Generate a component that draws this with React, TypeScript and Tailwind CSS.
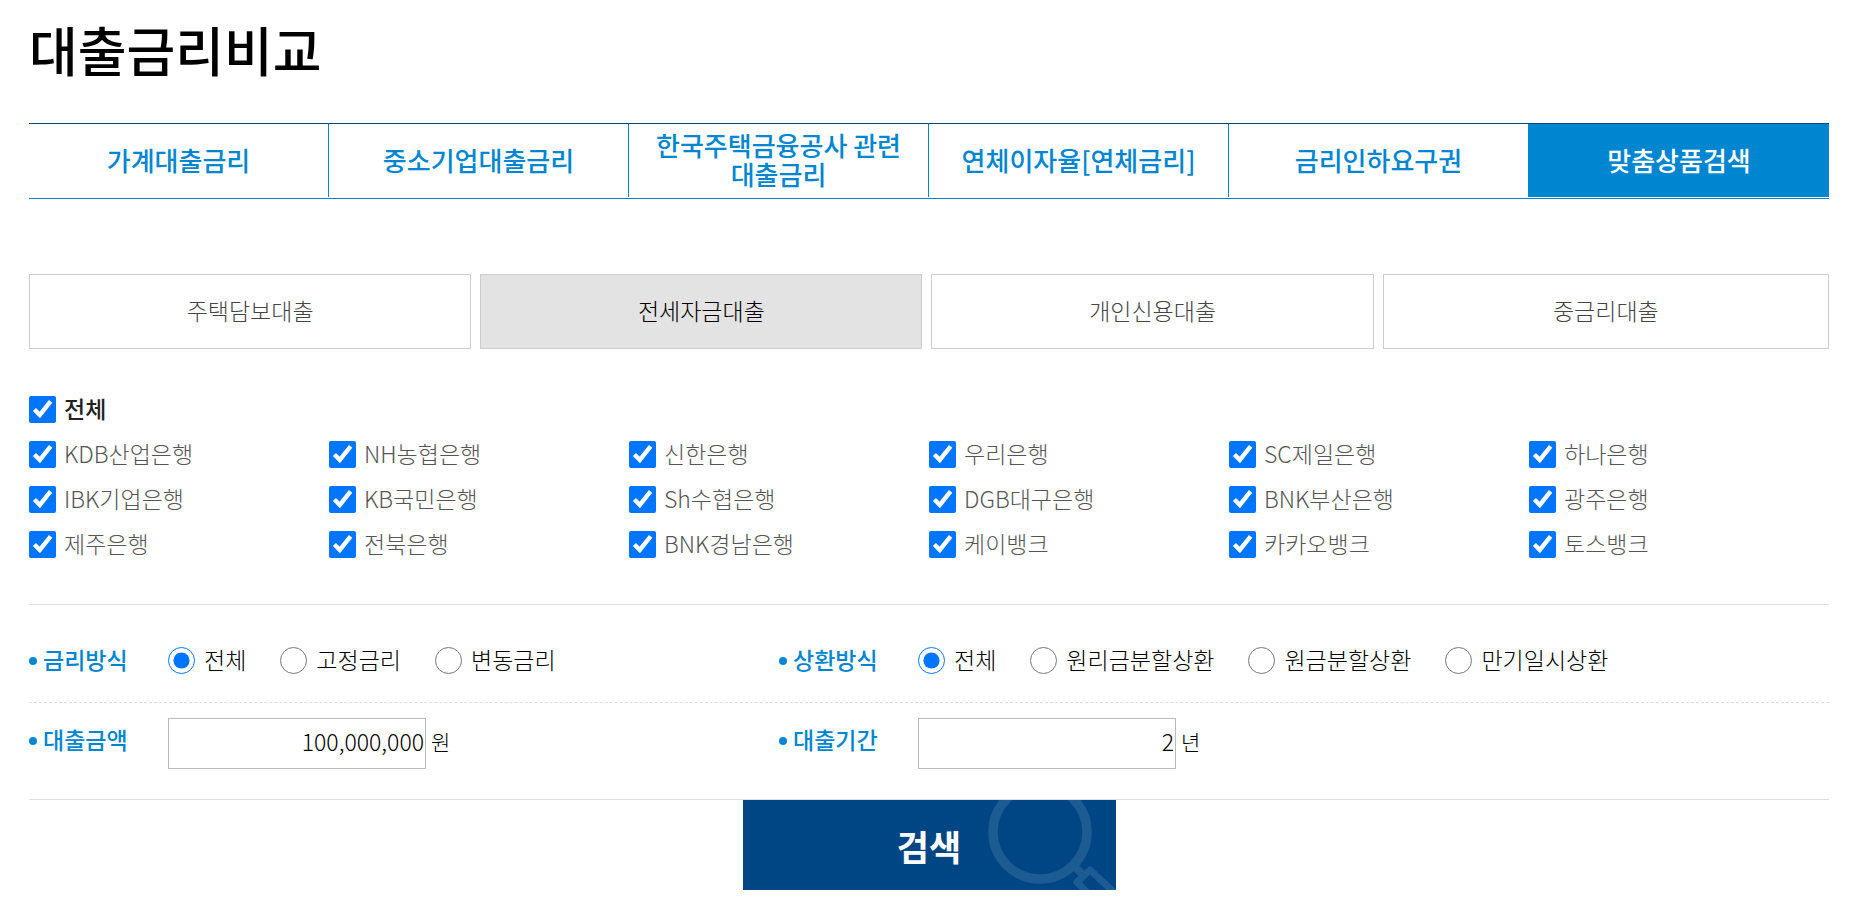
import React, { useState } from "react";
import clsx from "clsx";

const TABS = [
    "가계대출금리",
    "중소기업대출금리",
    "한국주택금융공사 관련 대출금리",
    "연체이자율[연체금리]",
    "금리인하요구권",
    "맞춤상품검색",
];

const LOAN_TYPES = ["주택담보대출", "전세자금대출", "개인신용대출", "중금리대출"];

const BANKS = [
    "KDB산업은행",
    "NH농협은행",
    "신한은행",
    "우리은행",
    "SC제일은행",
    "하나은행",
    "IBK기업은행",
    "KB국민은행",
    "Sh수협은행",
    "DGB대구은행",
    "BNK부산은행",
    "광주은행",
    "제주은행",
    "전북은행",
    "BNK경남은행",
    "케이뱅크",
    "카카오뱅크",
    "토스뱅크",
];

const RATE_TYPES = ["전체", "고정금리", "변동금리"];
const REPAY_TYPES = ["전체", "원리금분할상환", "원금분할상환", "만기일시상환"];

const FieldTitle: React.FC<{ children: React.ReactNode }> = ({ children }) => (
    <span className="flex w-[139px] shrink-0 items-center gap-[6px] font-medium text-[#0086d1]">
        <span className="h-2 w-2 rounded-full bg-[#0086d1]" />
        <span className="pb-0.5 leading-[25px]">{children}</span>
    </span>
);

type RadioFieldProps = {
    title: string;
    name: string;
    options: string[];
};

const RadioField: React.FC<RadioFieldProps> = ({ title, name, options }) => {
    const [value, setValue] = useState(options[0]);

    return (
        <div role="radiogroup" aria-label={title} className="flex h-[97px] items-center pt-3.5">
            <FieldTitle>{title}</FieldTitle>
            <div className="flex gap-[34px]">
                {options.map((option) => (
                    <label key={option} className="flex items-center gap-[9px] whitespace-nowrap">
                        <input
                            type="radio"
                            name={name}
                            value={option}
                            checked={value === option}
                            onChange={() => setValue(option)}
                            className="h-[27px] w-[27px]"
                        />
                        <span className="pb-0.5 leading-[25px]">{option}</span>
                    </label>
                ))}
            </div>
        </div>
    );
};

type NumberFieldProps = {
    title: string;
    id: string;
    unit: string;
    initial: string;
};

const NumberField: React.FC<NumberFieldProps> = ({ title, id, unit, initial }) => {
    const [value, setValue] = useState(initial);

    return (
        <div className="flex h-[96px] items-start pt-[15px]">
            <label htmlFor={id} className="flex h-[45px] items-center">
                <FieldTitle>{title}</FieldTitle>
            </label>
            <input
                id={id}
                type="text"
                value={value}
                onChange={(e) => setValue(e.target.value)}
                className="h-[51px] w-[258px] border border-[#bbb] pr-px pb-1.5 text-right"
            />
            <span className="ml-[5px] flex h-[46px] items-center text-[21px]">{unit}</span>
        </div>
    );
};

type BankCheckProps = {
    label: string;
    checked: boolean;
    onChange: () => void;
    className?: string;
};

const BankCheck: React.FC<BankCheckProps> = ({ label, checked, onChange, className }) => (
    <label className={clsx("flex items-center gap-2", className)}>
        <input
            type="checkbox"
            checked={checked}
            onChange={onChange}
            className="h-[27px] w-[27px]"
        />
        <span className="pb-0.5 leading-[25px]">{label}</span>
    </label>
);

const App: React.FC = () => {
    const [activeTab, setActiveTab] = useState("맞춤상품검색");
    const [loanType, setLoanType] = useState("전세자금대출");
    const [selected, setSelected] = useState<string[]>(BANKS);

    const allSelected = selected.length === BANKS.length;

    const toggleBank = (bank: string) => {
        setSelected((prev) =>
            prev.includes(bank) ? prev.filter((item) => item !== bank) : [...prev, bank]
        );
    };

    return (
        <main className="bg-white pt-3 pr-6 pb-8 pl-[29px] font-['Noto_Sans_CJK_KR',sans-serif] text-[23px] leading-[27px] font-light text-black">
            <h1 className="text-[53px] leading-[75px] font-medium text-black">대출금리비교</h1>

            {/* Main tabs */}
            <nav className="mt-9 grid grid-cols-6 border-t border-b border-t-[#004685] border-b-[#0086d1] pb-px">
                {TABS.map((tab) => (
                    <button
                        key={tab}
                        type="button"
                        onClick={() => setActiveTab(tab)}
                        className={clsx(
                            "h-[73px] px-5 pb-[3px] text-[26px] leading-[29px] font-medium break-keep",
                            tab === activeTab
                                ? "bg-[#0086d1] text-white"
                                : "border-r border-[#0086d1] text-[#0086d1]"
                        )}
                    >
                        {tab}
                    </button>
                ))}
            </nav>

            {/* Loan type */}
            <div className="mt-[75px] grid grid-cols-[442fr_442fr_442fr_446fr] gap-[9px]">
                {LOAN_TYPES.map((type) => (
                    <button
                        key={type}
                        type="button"
                        onClick={() => setLoanType(type)}
                        className={clsx(
                            "h-[75px] border border-[#ccc] pb-[3px]",
                            type === loanType ? "bg-[#e3e3e3] text-black" : "text-[#444]"
                        )}
                    >
                        {type}
                    </button>
                ))}
            </div>

            {/* Banks */}
            <div className="mt-[47px] border-b border-[#ddd] pb-[46px]">
                <BankCheck
                    label="전체"
                    checked={allSelected}
                    onChange={() => setSelected(allSelected ? [] : BANKS)}
                    className="w-fit font-medium text-[#222]"
                />
                <div className="mt-[18px] grid grid-cols-6 gap-y-[18px] text-[#555]">
                    {BANKS.map((bank) => (
                        <BankCheck
                            key={bank}
                            label={bank}
                            checked={selected.includes(bank)}
                            onChange={() => toggleBank(bank)}
                        />
                    ))}
                </div>
            </div>

            {/* Conditions */}
            <div className="grid grid-cols-[750fr_1050fr] border-b border-dashed border-[#ddd]">
                <RadioField title="금리방식" name="rateType" options={RATE_TYPES} />
                <RadioField title="상환방식" name="repayType" options={REPAY_TYPES} />
            </div>
            <div className="grid grid-cols-[750fr_1050fr] border-b border-[#ddd]">
                <NumberField title="대출금액" id="amount" unit="원" initial="100,000,000" />
                <NumberField title="대출기간" id="period" unit="년" initial="2" />
            </div>

            <button
                type="button"
                className="relative mx-auto block h-[90px] w-[373px] overflow-hidden bg-[#004685] text-[35px] font-bold text-white"
            >
                <svg
                    className="absolute inset-0 h-full w-full"
                    viewBox="0 0 373 90"
                    fill="none"
                    stroke="#1d5b93"
                    aria-hidden="true"
                >
                    <circle cx="297" cy="32" r="47" strokeWidth="9.5" />
                    <path d="M330 65 L339 74" strokeWidth="8" />
                    <path
                        d="M351 100 L334 82 L347 70 L373 94"
                        strokeWidth="7"
                        strokeLinejoin="round"
                    />
                </svg>
                <span className="relative">검색</span>
            </button>
        </main>
    );
};

export default App;
